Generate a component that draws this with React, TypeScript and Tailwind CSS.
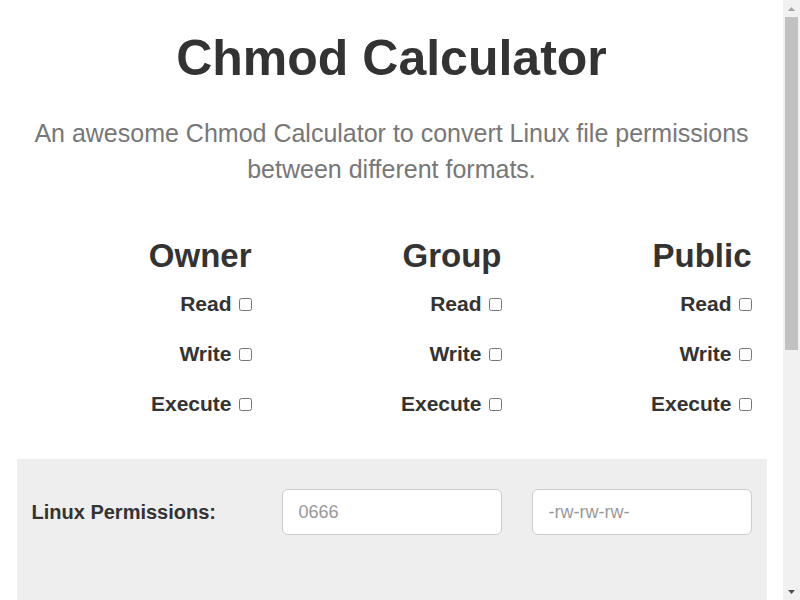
import React from "react";

const groups = ["Owner", "Group", "Public"];
const perms = ["Read", "Write", "Execute"];

const PermColumn = ({ title }: { title: string }) => {
  return (
    <div className="text-right">
      <h2 className="text-[33px] leading-[35px] font-bold text-[#333]">{title}</h2>
      <div className="mt-[6px] flex flex-col">
        {perms.map((p) => (
          <label key={p} className="h-[50px] flex items-baseline justify-end pt-[13px] text-[21px] leading-[24px] font-bold text-[#333]">
            <span>{p}</span>
            <input type="checkbox" className="ml-[7px] w-[13px] h-[13px]" />
          </label>
        ))}
      </div>
    </div>
  );
};

// fake window scrollbar, the reference was shot with one
const Scrollbar = () => (
  <div className="fixed top-0 right-0 w-[17px] h-full bg-[#f1f1f1] flex flex-col items-center">
    <div className="h-[17px] flex items-center justify-center">
      <svg width="7" height="4" viewBox="0 0 7 4"><path d="M0 4 L3.5 0 L7 4 Z" fill="#a3a3a3" /></svg>
    </div>
    <div className="w-[13px] h-[333px] bg-[#c1c1c1]" />
    <div className="flex-1" />
    <div className="h-[17px] flex items-center justify-center">
      <svg width="7" height="4" viewBox="0 0 7 4"><path d="M0 0 L7 0 L3.5 4 Z" fill="#505050" /></svg>
    </div>
  </div>
);

export default function App() {
  return (
    <div className="w-[783px] min-h-[820px] bg-white font-['Liberation_Sans',Arial,sans-serif] text-[#333]">
      <div className="w-[750px] mx-auto">
        <div className="pt-[31px] px-[15px] text-center">
          <h1 className="text-[50px] leading-[55px] font-bold text-[#333]">Chmod Calculator</h1>
          <p className="mt-[29px] text-[25px] leading-[36px] text-[#777]">
            An awesome Chmod Calculator to convert Linux file permissions between different formats.
          </p>
        </div>

        <div className="mt-[51px] px-[15px] grid grid-cols-3 gap-[30px]">
          {groups.map((g) => (
            <PermColumn key={g} title={g} />
          ))}
        </div>

        <div className="mt-[30px] bg-[#eee] px-[15px] pt-[30px] min-h-[360px]">
          <div className="grid grid-cols-3 gap-[30px] items-center">
            <div className="text-[20px] font-bold text-[#333]">Linux Permissions:</div>
            <input
              type="text"
              placeholder="0666"
              className="h-[46px] px-[16px] text-[18px] bg-white border border-[#ccc] rounded-[6px] placeholder:text-[#999] outline-none"
            />
            <input
              type="text"
              placeholder="-rw-rw-rw-"
              className="h-[46px] px-[16px] text-[18px] bg-white border border-[#ccc] rounded-[6px] placeholder:text-[#999] outline-none"
            />
          </div>
        </div>
      </div>
      <Scrollbar />
    </div>
  );
}
